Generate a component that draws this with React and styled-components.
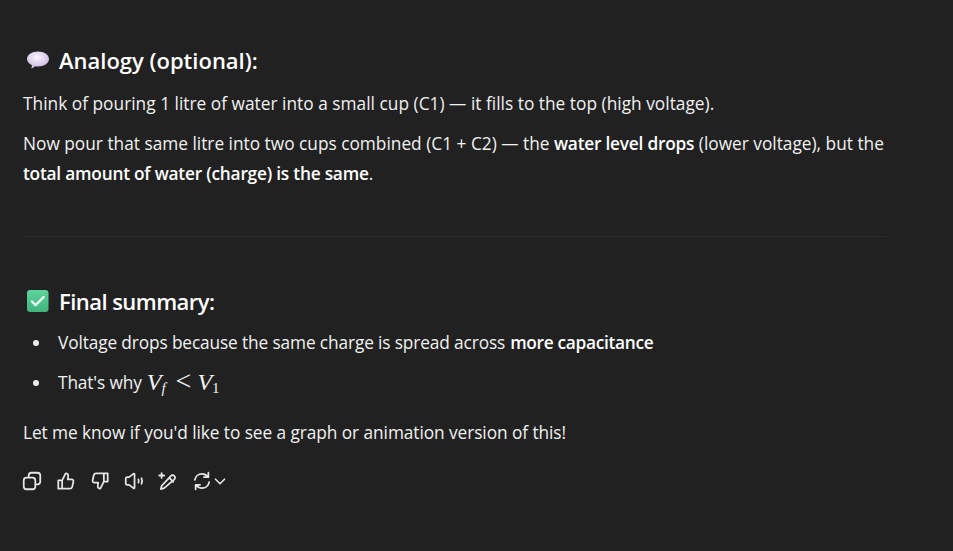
import React from "react";
import styled, { createGlobalStyle } from "styled-components";

const Global = createGlobalStyle`
  html, body { margin: 0; padding: 0; background: #212121; }
  body { width: 953px; height: 551px; overflow: hidden; }
`;
const Page = styled.main`
  box-sizing: border-box; width: 953px; height: 551px; padding: 45px 67px 0 23px;
  background: #212121; color: #f1f1f1;
  font-family: "Open Sans", "Noto Sans", sans-serif; font-size: 17.3px; line-height: 30px;
`;
const Heading = styled.h3`
  display: flex; align-items: center; gap: 8px; margin: 0; height: 30px;
  font-size: 22px; font-weight: 600; color: #fff; letter-spacing: ${p => p.$track || 0}px;
`;
const Para = styled.p`
  margin: ${p => p.$top || 0}px 0 0; letter-spacing: ${p => p.$track || 0}px;
  strong { font-weight: 600; color: #fff; letter-spacing: -0.22px; }
`;
const Rule = styled.hr`
  border: 0; height: 1px; background: #2b2b2b; margin: 47px 0 49px;
`;
const List = styled.ul`
  list-style: none; margin: 12px 0 0; padding: 0;
`;
const Item = styled.li`
  display: flex; align-items: center; height: 30px; margin-bottom: 10px; letter-spacing: -0.13px;
  strong { font-weight: 600; color: #fff; margin-left: 5px; letter-spacing: -0.3px; }
  &::before { content: ""; width: 6px; height: 6px; border-radius: 50%; background: #ececec; margin: 0 19px 0 10px; }
`;
const Formula = styled.span`
  font-family: "Liberation Serif", serif; font-size: 24px; margin-left: 5px; display: inline-flex; align-items: baseline; letter-spacing: 0;
  i { font-style: italic; }
  sub { font-size: 15px; vertical-align: baseline; position: relative; top: 3px; font-style: normal; }
  b { font-weight: 400; font-size: 28px; line-height: 0; margin: 0 6px 0 10px; }
`;
const Actions = styled.div`
  display: flex; align-items: center; gap: 12px; margin: 21px 0 0 -2px; height: 24px; color: #e6e6e6;
`;
const IconBtn = styled.button`
  display: flex; align-items: center; justify-content: center; width: 22px; height: 24px; padding: 0;
  background: none; border: 0; color: inherit;
  svg { width: 22px; height: 22px; fill: none; stroke: currentColor; stroke-width: 1.6; stroke-linecap: round; stroke-linejoin: round; }
`;
const Chevron = styled(IconBtn)`
  width: 18px; margin-left: -14px;
  svg { width: 18px; height: 18px; stroke-width: 1.8; }
`;

const Icon = ({ children }) => <IconBtn><svg viewBox="0 0 20 20">{children}</svg></IconBtn>;

export default function App() {
  return (
    <Page>
      <Global />
      <Heading>
        <svg width="28" height="24" viewBox="0 0 28 24"><defs><radialGradient id="b" cx="45%" cy="35%" r="70%"><stop offset="0" stopColor="#fbf7ff"/><stop offset="1" stopColor="#c4b0dc"/></radialGradient></defs><path d="M15 3.500c6 0 11 3 11 7.500s-5 7.500-11 7.500c-1 0-2-.1-3-.3-1 1.200-2.500 2.300-4 2.300.7-1 1-2.300.8-3.600C6 16 4 13.500 4 11c0-4.500 5-7.500 11-7.500z" fill="url(#b)"/></svg>
        Analogy (optional):
      </Heading>
      <Para $top={14} $track={0.02}>Think of pouring 1 litre of water into a small cup (C1) — it fills to the top (high voltage).</Para>
      <Para $top={10}>Now pour that same litre into two cups combined (C1 + C2) — the <strong>water level drops</strong> (lower voltage), but the<br /><strong>total amount of water (charge) is the same</strong>.</Para>
      <Rule />
      <Heading $track={-0.55}>
        <svg width="28" height="24" viewBox="0 0 28 24"><defs><linearGradient id="g" x1="0" y1="0" x2="0" y2="1"><stop offset="0" stopColor="#5ed39c"/><stop offset="1" stopColor="#3fb57c"/></linearGradient></defs><rect x="4" y="1" width="21.500" height="22" rx="3" fill="url(#g)"/><path d="M9 12.500l3.600 3.600 8-8" fill="none" stroke="#e8fff3" strokeWidth="2.400" strokeLinecap="round" strokeLinejoin="round"/></svg>
        Final summary:
      </Heading>
      <List>
        <Item><span>Voltage drops because the same charge is spread across</span><strong>more capacitance</strong></Item>
        <Item><span>That's why</span><Formula><i>V</i><sub><i>f</i></sub><b>&lt;</b><i>V</i><sub>1</sub></Formula></Item>
      </List>
      <Para $top={20} $track={-0.07}>Let me know if you'd like to see a graph or animation version of this!</Para>
      <Actions>
        <Icon><rect x="7" y="2.500" width="10.500" height="10.500" rx="2.500"/><rect x="2.500" y="7" width="10.500" height="10.500" rx="2.500" fill="#212121"/></Icon>
        <Icon><path d="M6.500 9.500v7.500M3 9.500h3.500v7.500H3zM6.500 9.500l3.200-6.500c1.600 0 2.600 1 2.300 2.700L11.600 8.500h3.400c1.200 0 2 1 1.700 2.200l-1.100 4.700c-.3 1-1 1.600-2 1.600H6.500"/></Icon>
        <Icon><path d="M13.500 10.500V3M17 10.500h-3.500V3H17zM13.500 10.500l-3.200 6.500c-1.600 0-2.600-1-2.300-2.700l.4-2.800H5c-1.200 0-2-1-1.700-2.200l1.100-4.700c.3-1 1-1.600 2-1.600h7.100"/></Icon>
        <Icon><path d="M2.500 8v4c0 1 .5 1.500 1.500 1.500h1.500L9.500 16.500c.6.400 1 .1 1-.6V4.100c0-.7-.4-1-1-.6L5.500 6.500H4C3 6.500 2.500 7 2.500 8zM14 8.500c.5 1 .5 2 0 3M16.800 7.500c.8 1.600.8 3.400 0 5"/></Icon>
        <Icon><path d="M6.500 16.500l-3 .8.800-3L12.500 5.500c1-1 2.500-1 3.300 0 .9.900.8 2.200-.2 3.200zM11 7l3.800 3.800M2 5h4.500M4.200 2.800v4.400" /></Icon>
        <Icon><path d="M3.500 9c.5-3.200 3.200-5.500 6.500-5.500 2.200 0 4.200 1.100 5.400 2.800M15.800 2.500v4H11.800M16.500 11c-.5 3.200-3.200 5.500-6.500 5.500-2.200 0-4.200-1.100-5.400-2.800M4.200 17.500v-4h4"/></Icon>
        <Chevron><svg viewBox="0 0 20 20"><path d="M5 8l5 5 5-5"/></svg></Chevron>
      </Actions>
    </Page>
  );
}
